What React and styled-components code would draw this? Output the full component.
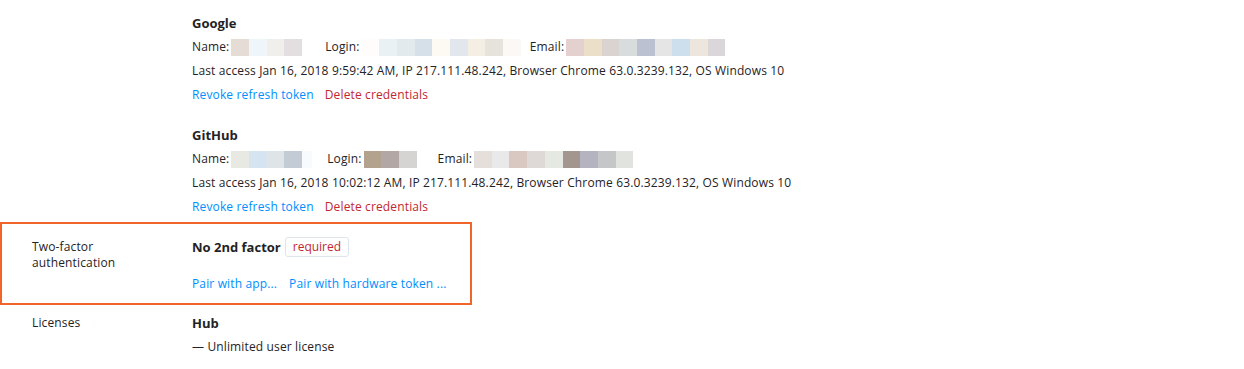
import React from 'react'
import styled, { createGlobalStyle } from 'styled-components'

const GlobalStyle = createGlobalStyle`
    html, body {
        margin: 0;
        padding: 0;
        background: #fff;
    }
    body {
        font-family: "Open Sans", "Noto Sans", sans-serif;
        font-size: 12px;
        letter-spacing: 0.14px;
        color: #1f2326;
    }
`

const Page = styled.div`
    padding-top: 15px;
`

const Row = styled.div`
    display: flex;
    box-sizing: border-box;
    padding-left: 32px;
    margin-top: ${props => props.top || 0}px;
`

const HighlightRow = styled(Row)`
    width: 472px;
    border: 2px solid #f0652a;
    padding: 13px 0 11px 30px;
`

const Label = styled.div`
    width: 160px;
    flex-shrink: 0;
    line-height: 16px;
    padding-top: ${props => props.offset || 0}px;
`

const Content = styled.div`
    display: flex;
    flex-direction: column;
`

const Block = styled.div`
    display: flex;
    flex-direction: column;
    margin-top: ${props => props.top || 0}px;
`

const Title = styled.div`
    display: flex;
    align-items: center;
    font-weight: 700;
    font-size: 13px;
    letter-spacing: 0;
    height: ${props => props.tall ? 20 : 16}px;
    line-height: 16px;
`

const Line = styled.div`
    display: flex;
    align-items: center;
    height: 16px;
    line-height: 16px;
    margin-top: ${props => props.top ?? 8}px;
`

const Field = styled.span`
    display: inline-flex;
    align-items: center;
    margin-right: ${props => props.gap || 0}px;
`

const Redacted = styled.span`
    display: inline-flex;
    margin-left: 2px;
    height: 17px;
`

const Pixel = styled.span`
    width: ${props => props.w || 17.7}px;
    height: 17px;
    background: ${props => props.color};
`

const Links = styled.div`
    display: flex;
    gap: ${props => props.gap || 11}px;
    line-height: 16px;
    margin-top: ${props => props.top ?? 8}px;
`

const Link = styled.a`
    color: ${props => props.danger ? '#c22731' : '#008eff'};
    text-decoration: none;
    cursor: pointer;
`

const Badge = styled.span`
    display: inline-flex;
    align-items: center;
    box-sizing: border-box;
    height: 20px;
    margin-left: 4px;
    padding: 0 7px;
    border: 1px solid #dfe5eb;
    border-radius: 3px;
    color: #c22731;
    font-weight: 400;
    font-size: 12px;
    letter-spacing: 0;
`

const accounts = [
    {
        name: 'Google',
        access: 'Last access Jan 16, 2018 9:59:42 AM, IP 217.111.48.242, Browser Chrome 63.0.3239.132, OS Windows 10',
        fields: [
            { label: 'Name:', gap: 23, pixels: ['#e6dcd6', '#eff6f9', '#f0efeb', '#e3dfe0'] },
            { label: 'Login:', gap: 9, pixels: ['#fefdfb', '#e9f1f4', '#e3eaee', '#d6e0e8', '#fdfaf4', '#e1e7ec', '#f5eee5', '#e6e3dd', '#fcf8f5'] },
            { label: 'Email:', gap: 0, pixels: ['#e3d0cf', '#ebdfca', '#dad4d1', '#d9dcdc', '#bbc1d1', '#e5e5e5', '#cddfec', '#ede6dc', '#dbd6da'] },
        ],
    },
    {
        name: 'GitHub',
        access: 'Last access Jan 16, 2018 10:02:12 AM, IP 217.111.48.242, Browser Chrome 63.0.3239.132, OS Windows 10',
        fields: [
            { label: 'Name:', gap: 15, pixels: ['#e9e9e4', '#d5e4f0', '#dfe5e6', '#c3ccd4', ['#f8fbfe', 10]] },
            { label: 'Login:', gap: 21, pixels: ['#b3a38e', '#b2a7a4', '#d6d4d2'] },
            { label: 'Email:', gap: 0, pixels: ['#e4dfdb', '#e9e9ea', '#d8c8c1', '#ded9d6', '#e6e9e1', '#a3968f', '#b4b3c0', '#c5c6c8', '#e1e3de'] },
        ],
    },
]

function Account({ account, top }) {
    return (
        <Block top={top}>
            <Title>{account.name}</Title>
            <Line>
                {account.fields.map(f => (
                    <Field key={f.label} gap={f.gap}>
                        {f.label}
                        <Redacted>
                            {f.pixels.map((p, i) => Array.isArray(p)
                                ? <Pixel key={i} color={p[0]} w={p[1]} />
                                : <Pixel key={i} color={p} />)}
                        </Redacted>
                    </Field>
                ))}
            </Line>
            <Line>{account.access}</Line>
            <Links>
                <Link>Revoke refresh token</Link>
                <Link danger>Delete credentials</Link>
            </Links>
        </Block>
    )
}

export default function App() {
    return (
        <Page>
            <GlobalStyle />
            <Row>
                <Label />
                <Content>
                    {accounts.map((a, i) => <Account key={a.name} account={a} top={i ? 24 : 0} />)}
                </Content>
            </Row>
            <HighlightRow top={7}>
                <Label offset={2}>Two-factor<br />authentication</Label>
                <Content>
                    <Title tall>No 2nd factor<Badge>required</Badge></Title>
                    <Links top={19} gap={12}>
                        <Link>Pair with app...</Link>
                        <Link>Pair with hardware token ...</Link>
                    </Links>
                </Content>
            </HighlightRow>
            <Row top={10}>
                <Label>Licenses</Label>
                <Content>
                    <Title>Hub</Title>
                    <Line>— Unlimited user license</Line>
                </Content>
            </Row>
        </Page>
    )
}
